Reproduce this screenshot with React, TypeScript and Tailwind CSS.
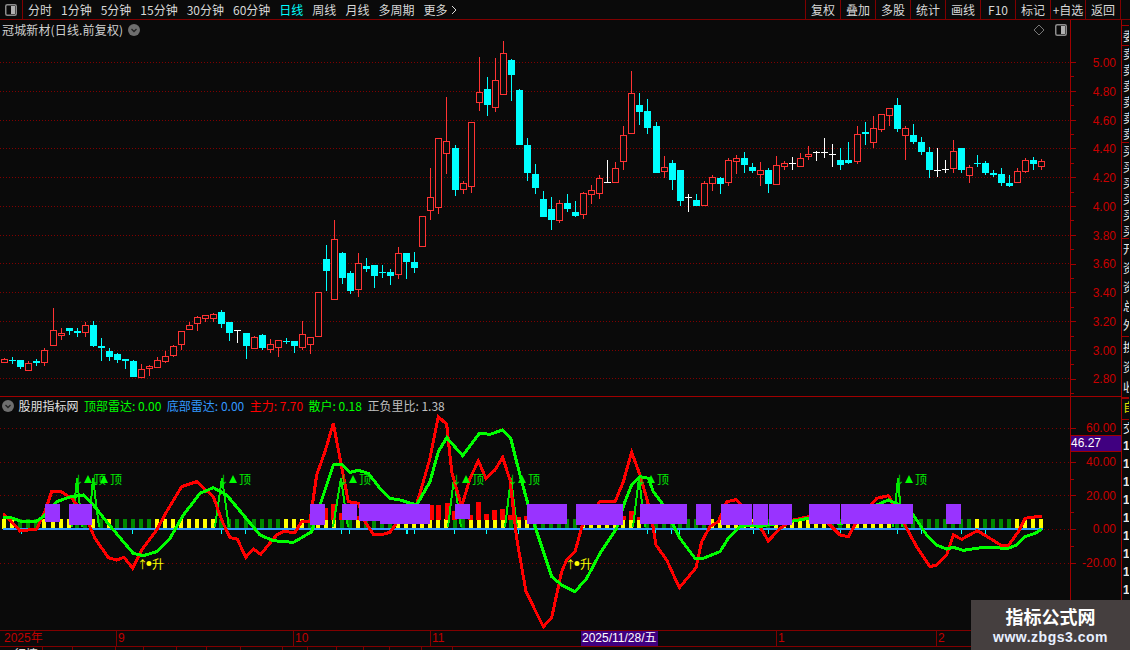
import React from 'react'

const CJK = { fontFamily: '"Noto Sans CJK SC", "Liberation Sans", sans-serif' }
const NUM = { fontFamily: '"Liberation Sans", "Noto Sans CJK SC", sans-serif' }

// t, b, hi, lo, colour (page y pixels)
const CANDLES: [number, number, number, number, string][] = [
  [359,362,358,363,'r'],[360,361,357,364,'c'],[360,367,360,369,'c'],[363,370,361,370,'r'],[361,363,359,366,'c'],
  [350,362,348,366,'r'],[330,345,308,345,'r'],[333,335,328,340,'r'],[328,331,328,335,'c'],[331,333,328,337,'c'],
  [325,332,322,337,'r'],[325,346,321,347,'c'],[346,348,338,361,'c'],[351,357,348,361,'c'],[354,360,353,363,'c'],
  [359,361,359,369,'c'],[361,377,360,377,'c'],[369,377,364,377,'r'],[366,368,365,376,'r'],[360,367,357,367,'r'],
  [356,361,351,363,'r'],[346,355,345,357,'r'],[331,344,331,350,'r'],[325,329,322,330,'r'],[317,323,316,331,'r'],
  [315,318,315,322,'r'],[314,318,313,322,'r'],[312,324,310,328,'c'],[322,333,322,341,'c'],[330,331,330,343,'w'],
  [333,346,333,359,'c'],[337,348,336,348,'r'],[335,348,334,350,'c'],[344,349,339,353,'r'],[340,347,340,357,'r'],
  [341,342,338,344,'c'],[341,346,341,353,'c'],[334,347,321,350,'r'],[337,344,337,354,'r'],[292,336,292,337,'r'],
  [259,271,245,291,'c'],[239,299,220,299,'r'],[253,278,252,284,'c'],[273,291,271,294,'c'],[263,289,253,297,'r'],
  [266,269,258,272,'c'],[265,276,265,288,'c'],[272,273,265,278,'c'],[272,276,269,285,'c'],[253,274,247,279,'r'],
  [253,262,253,279,'c'],[262,268,252,273,'c'],[216,246,216,246,'r'],[197,210,168,220,'r'],[138,207,138,214,'r'],
  [141,153,97,174,'r'],[148,190,145,196,'c'],[183,189,181,194,'r'],[122,186,122,193,'r'],[92,102,57,111,'r'],
  [89,105,77,116,'c'],[80,107,58,112,'r'],[53,94,41,94,'r'],[60,75,59,101,'c'],[90,145,89,145,'c'],
  [145,173,138,181,'c'],[174,188,164,194,'c'],[199,217,191,217,'c'],[209,220,197,230,'c'],[203,220,200,223,'r'],
  [203,209,194,212,'c'],[212,216,201,217,'c'],[193,214,192,219,'r'],[190,194,185,204,'r'],[178,193,175,199,'r'],
  [182,183,160,183,'w'],[168,182,162,183,'r'],[135,161,126,170,'r'],[93,133,71,133,'r'],[105,112,93,125,'c'],
  [111,128,99,134,'c'],[126,173,122,173,'c'],[167,171,156,178,'r'],[163,180,160,190,'c'],[170,201,170,206,'c'],
  [197,198,194,212,'w'],[200,206,194,206,'c'],[183,205,181,206,'r'],[177,183,175,191,'r'],[178,184,177,194,'c'],
  [160,182,158,186,'r'],[158,161,155,174,'r'],[158,165,152,173,'c'],[167,171,163,173,'c'],[170,174,162,186,'r'],
  [170,184,168,193,'c'],[165,184,156,184,'r'],[163,166,161,170,'r'],[163,164,157,170,'w'],[158,166,153,167,'r'],
  [154,156,146,160,'r'],[152,153,151,161,'w'],[152,153,138,158,'w'],[154,155,144,167,'w'],[160,165,148,170,'c'],
  [160,163,142,164,'c'],[134,161,126,164,'r'],[132,134,122,145,'c'],[128,142,116,148,'r'],[114,129,114,132,'r'],
  [108,115,108,126,'r'],[105,129,98,132,'c'],[128,135,126,160,'r'],[135,142,124,144,'c'],[142,152,137,155,'c'],
  [152,170,147,178,'c'],[170,171,148,177,'w'],[169,170,160,173,'w'],[151,168,140,173,'r'],[148,170,148,173,'c'],
  [167,175,165,183,'r'],[163,164,155,167,'c'],[163,173,161,175,'c'],[173,175,170,177,'c'],[174,183,168,186,'c'],
  [183,186,175,187,'c'],[171,182,168,183,'r'],[160,171,158,173,'r'],[160,164,157,170,'c'],[161,166,159,170,'r'],
]

const BARS =
  'YYGGGYYYYGGYGYGGGGGYYYYYYYYGGGGGGGGYYYGYYYGGYGG' +
  'GGYYYYYYYGGYYYYYGYYGGGGGGYYYYYYYYGGGGGGGGYYYYYY' +
  'GGYYYYYYYGGYYYYYYGGGGGGGGGGYGGGGYYYY'

const cx = (i: number) => Math.round(4.3 + 8.04 * i)

// Line points read at 3x, with the x offset of each crop
const at = (off: number, pts: number[][]) => pts.map(([x, y]) => `${off + x / 3},${395 + y / 3}`)

const RED = [
  ...at(0, [[10,356],[30,375],[60,408],[110,402],[135,350],[155,290],[185,291],[215,310],[240,340],[265,385],[285,430],[325,488],[350,495],[372,487],[398,520],[425,465],[470,405],[500,350],[545,275],[590,260],[640,305],[665,375],[690,428],[712,432],[737,487],[760,462],[782,478],[830,420],[850,410],[885,412],[905,380],[930,380],[950,240],[975,170],[1000,85],[1020,190],[1045,320],[1075,325],[1095,380],[1120,418]]),
  ...at(380, [[0,420],[30,412],[60,370],[105,345],[130,260],[150,190],[175,65],[200,88],[215,230],[245,335],[270,250],[295,198],[318,250],[345,225],[368,187],[390,255],[410,430],[438,590],[490,695],[515,668],[545,530],[560,495],[585,470],[610,380],[660,320],[705,320],[730,260],[755,172],[780,240],[800,310],[815,370],[828,450],[860,495],[898,578],[948,518],[965,440],[990,395],[1015,380],[1040,320],[1068,314],[1090,335]]),
  ...at(750, [[5,385],[30,395],[55,438],[90,400],[130,375],[175,365],[230,380],[270,420],[295,425],[320,380],[380,310],[415,302],[445,350],[470,400],[500,455],[540,515],[560,510],[590,480],[610,420],[635,433],[682,407],[720,430],[755,452],[775,452],[805,410],[825,370],[875,363]]),
].join(' ')

const GREEN = [
  ...at(0, [[10,367],[30,367],[60,378],[110,378],[130,365],[170,320],[210,306],[250,300],[280,330],[320,380],[370,440],[400,475],[430,482],[470,470],[510,430],[550,360],[600,295],[640,278],[680,300],[730,360],[780,420],[820,437],[880,442],[910,425],[935,410],[960,330],[1000,210],[1025,208],[1050,232],[1075,226],[1105,235]]),
  ...at(380, [[0,280],[30,310],[60,315],[110,330],[150,260],[175,170],[200,128],[248,182],[298,115],[330,118],[367,105],[392,130],[420,240],[450,350],[490,470],[515,545],[545,570],[585,590],[620,550],[660,475],[710,400],[735,320],[755,270],[780,245],[805,250],[820,290],[850,330],[880,390],[900,430],[945,490],[970,490],[1020,470],[1045,430],[1080,395]]),
  ...at(750, [[0,390],[30,395],[50,390],[90,385],[130,378],[175,370],[230,380],[270,385],[310,380],[380,330],[415,315],[450,330],[490,360],[530,420],[560,450],[590,462],[610,457],[640,466],[680,460],[700,457],[775,460],[800,450],[825,425],[855,415],[875,403]]),
].join(' ')

// left foot, peak, right foot
const SPIKES = [[72,77,82],[89,93,99],[215,222,229],[333,341,348],[448,454,461],[505,511,517],[633,639,645],[893,898,902]]
const TOPS = [88,104,233,353,466,522,651,909]
const RISES = [142,570]
const TICKS = [21,132,221,245,341,349,407,406,406+0.1,414,454,486,518,647,655,671,679,753,768,840,897,921,961,985]

// x1, x2, bottom
const BLOCKS = [
  [45,60,522],[69,92,525],[310,325,525],[342,357,520],[359,380,521],
  [380,430,524],[455,470,519],[527,567,524],[576,623,525],[640,687,524],
  [696,711,525],[721,752,525],[753,768,525],[769,792,525],[809,840,524],[841,913,524],[946,961,524],
]

const REDBARS = [
  [325,508],[333,504],[341,513],[358,516],
  [431,505],[438,505],[447,503],[454,511],[470,515],[478,502],[486,514],[494,510],[502,509],[510,515],[518,517],[526,516],
  [623,516],[631,511],[639,517],
]

const NAV = ['分时', '1分钟', '5分钟', '15分钟', '30分钟', '60分钟', '日线', '周线', '月线', '多周期']
const TOOLS = ['复权', '叠加', '多股', '统计', '画线', 'F10', '标记', '+自选', '返回']
const PRICES = ['5.00', '4.80', '4.60', '4.40', '4.20', '4.00', '3.80', '3.60', '3.40', '3.20', '3.00', '2.80']
const OSC = ['60.00', '40.00', '20.00', '0.00', '-20.00']

function PanelIcon({ className }: { className: string }) {
  return (
    <svg viewBox="0 0 12 12" className={className}>
      <rect x="0.75" y="0.75" width="10.5" height="10.5" rx="1.5" fill="none" stroke="#8c8c8c" strokeWidth="1.5" />
      <rect x="6" y="2" width="4" height="8" fill="#b0b0b0" />
    </svg>
  )
}

function Chevron({ className }: { className: string }) {
  return (
    <svg viewBox="0 0 12 12" className={className}>
      <circle cx="6" cy="6" r="6" fill="#6e6e6e" />
      <path d="M3.5 5 L6 7.5 L8.5 5" fill="none" stroke="#222" strokeWidth="1.3" />
    </svg>
  )
}

function TopBar() {
  return (
    <div className="flex h-[20px] shrink-0 items-stretch border-b border-[#800000] text-[12px] leading-[19px] text-[#d8d8d8]" style={CJK}>
      <div className="flex w-[23px] items-center justify-center border-r border-[#800000]">
        <PanelIcon className="h-[12px] w-[12px]" />
      </div>
      <div className="ml-[5px] flex gap-[9px]">
        {NAV.map((n) => (
          <span key={n} className={n === '日线' ? 'text-[#00ffff]' : ''}>{n}</span>
        ))}
        <span className="flex items-center gap-[4px]">
          更多
          <svg viewBox="0 0 6 10" className="h-[10px] w-[6px]">
            <path d="M1 1 L5 5 L1 9" fill="none" stroke="#d8d8d8" />
          </svg>
        </span>
      </div>
      <div className="ml-auto flex">
        {TOOLS.map((t) => (
          <span key={t} className="w-[35px] border-l border-[#800000] text-center">{t}</span>
        ))}
        <span className="w-[10px] border-l border-[#800000]" />
      </div>
    </div>
  )
}

function MainChart() {
  return (
    <svg viewBox="0 20 1070 376" className="absolute inset-0 h-[376px] w-[1070px]" shapeRendering="crispEdges">
      {PRICES.map((_, i) => (
        <line key={i} x1="0" x2="1070" y1={62.5 + Math.round(28.75 * i)} y2={62.5 + Math.round(28.75 * i)} stroke="#800000" strokeDasharray="1 2" />
      ))}
      {CANDLES.map(([t, b, hi, lo, c], i) => {
        const x = cx(i)
        const col = c === 'r' ? '#ff3333' : c === 'c' ? '#00ffff' : '#ffffff'
        return (
          <g key={i}>
            <line x1={x + 0.5} x2={x + 0.5} y1={hi} y2={lo} stroke={col} />
            {c === 'r' ? (
              <rect x={x - 2.5} y={t + 0.5} width="6" height={Math.max(b - t, 1)} fill="#0a0a0a" stroke={col} />
            ) : (
              <rect x={x - 3} y={t} width="7" height={Math.max(b - t, 1)} fill={col} />
            )}
          </g>
        )
      })}
    </svg>
  )
}

function Oscillator() {
  return (
    <svg viewBox="0 397 1070 233" className="absolute inset-0 h-[233px] w-[1070px]" style={CJK}>
      <g shapeRendering="crispEdges">
        {[428.5, 462.5, 495.5, 563.5].map((y) => (
          <line key={y} x1="0" x2="1070" y1={y} y2={y} stroke="#800000" strokeDasharray="1 3" />
        ))}
        <line x1="1044" x2="1070" y1="529.5" y2="529.5" stroke="#800000" strokeDasharray="1 3" />
        {BARS.split('').map((b, i) => (
          <rect key={i} x={cx(i) - 2} y="519" width="4" height="10" fill={b === 'Y' ? '#ffff00' : '#008a00'} />
        ))}
        {TICKS.map((x) => (
          <line key={x} x1={x} x2={x} y1="530" y2="534" stroke="#00ffff" />
        ))}
        {REDBARS.map(([x, t]) => (
          <rect key={x} x={x - 2.5} y={t} width="5" height={520 - t} fill="#ff0000" />
        ))}
        <rect x="3" y="528" width="1040" height="2" fill="#3399ff" />
        {SPIKES.map(([a, p, c]) => (
          <polyline key={p} points={`${a},527 ${p},478 ${c},527`} fill="none" stroke="#00e800" strokeWidth="2" />
        ))}
        <polyline points={RED} fill="none" stroke="#ff0000" strokeWidth="3" />
        <polyline points={GREEN} fill="none" stroke="#00ff00" strokeWidth="3" />
        {BLOCKS.map(([a, c, b]) => (
          <rect key={a} x={a} y="504" width={c - a} height={b - 504} fill="#9933ff" />
        ))}
      </g>
      {TOPS.map((x) => (
        <g key={x}>
          <path d={`M${x - 4} 483 L${x} 475 L${x + 4} 483 Z`} fill="#00ff00" />
          <text x={x + 6} y="484" fontSize="12" fill="#00e800">顶</text>
          <text x={x - 15} y="484" fontSize="11" fill="#00e800">↓</text>
        </g>
      ))}
      {RISES.map((x) => (
        <g key={x} fill="#ffff00">
          <text x={x - 5} y="569" fontSize="11">↑</text>
          <circle cx={x + 7} cy="563.5" r="2.5" />
          <text x={x + 10} y="569" fontSize="12">升</text>
        </g>
      ))}
    </svg>
  )
}

function Legend() {
  return (
    <div className="relative flex h-[18px] items-center gap-[5.5px] pl-[2px] text-[12px]" style={CJK}>
      <Chevron className="h-[12px] w-[12px]" />
      <span className="ml-[-1px] text-[#e0e0e0]">股朋指标网</span>
      <span className="text-[#00ff00]">顶部雷达: 0.00</span>
      <span className="text-[#3399ff]">底部雷达: 0.00</span>
      <span className="text-[#ff0000]">主力: 7.70</span>
      <span className="text-[#00ff00]">散户: 0.18</span>
      <span className="text-[#c0c0c0]">正负里比: 1.38</span>
    </div>
  )
}

function DateRow() {
  const cell = 'border-l border-[#800000] pl-[1px] text-[#c00000]'
  return (
    <div className="flex h-[17px] shrink-0 border-y border-[#800000] text-[12px] leading-[15px]" style={NUM}>
      <span className="w-[116px] pl-[4px] text-[#c00000]">2025年</span>
      <span className={`${cell} w-[177px]`}>9</span>
      <span className={`${cell} w-[137px]`}>10</span>
      <span className={`${cell} w-[151px]`}>11</span>
      <span className="w-[77px] whitespace-nowrap bg-[#400080] pl-[1px] text-[#ffffff]">2025/11/28/五</span>
      <span className="w-[118px]" />
      <span className={`${cell} w-[160px]`}>1</span>
      <span className={`${cell} w-[134px]`}>2</span>
    </div>
  )
}

function PriceAxis() {
  return (
    <div className="relative flex w-[51px] flex-col border-l border-[#a00000] pt-[29px] text-right text-[12px] text-[#c80000]" style={NUM}>
      <svg viewBox="0 20 50 376" className="absolute inset-0 h-[376px] w-[50px]" shapeRendering="crispEdges">
        {Array.from({ length: 24 }).map((_, i) => (
          <line key={i} x1="0" x2={i % 2 ? 3 : 5} y1={62.5 + 14.4 * i} y2={62.5 + 14.4 * i} stroke="#a00000" />
        ))}
      </svg>
      {PRICES.map((p) => (
        <span key={p} className="h-[28.75px] pr-[5px] leading-[28px]">{p}</span>
      ))}
    </div>
  )
}

function OscAxis() {
  return (
    <div className="relative flex w-[51px] flex-col border-l border-[#a00000] pt-[15px] text-right text-[12px] text-[#c80000]" style={NUM}>
      <svg viewBox="0 397 50 233" className="absolute inset-0 h-[233px] w-[50px]" shapeRendering="crispEdges">
        {Array.from({ length: 9 }).map((_, i) => (
          <line key={i} x1="0" x2={i % 2 ? 3 : 5} y1={428.5 + 16.85 * i} y2={428.5 + 16.85 * i} stroke="#a00000" />
        ))}
      </svg>
      {OSC.map((p) => (
        <span key={p} className="h-[33.75px] pr-[5px] leading-[33px]">{p}</span>
      ))}
      <span className="absolute left-0 top-[38px] h-[17px] w-[50px] border-y border-[#a00000] bg-[#400080] text-left leading-[15px] text-[#ffffff]">46.27</span>
    </div>
  )
}

function SideColumn() {
  const groups: [string, string[], string][] = [
    ['h-[20px]', ['委'], 'h-[20px]'],
    ['h-[97px]', ['卖', '卖', '卖', '卖', '卖', '卖'], 'h-[16px]'],
    ['h-[96px]', ['买', '买', '买', '买', '买', '买'], 'h-[16px]'],
    ['h-[98px]', ['开', '资', '资', '总', '外'], 'h-[19px]'],
    ['h-[61px]', ['换', '资', '收'], 'h-[20px]'],
  ]
  return (
    <div className="w-[8px] overflow-hidden border-l border-[#a00000] pt-[5px] text-[12px] leading-none text-[#e8e8e8]" style={CJK}>
      {groups.map(([h, chars, row], g) => (
        <div key={g} className={`${h} w-[20px] border-t border-[#a00000]`}>
          {chars.map((c, i) => (
            <div key={i} className={`${row} flex items-center pl-[1px]`}>{c}</div>
          ))}
        </div>
      ))}
      <div className="h-[22px] w-[20px] border-t-2 border-[#a00000] pl-[1px] pt-[2px] text-[#e0e000]">自</div>
      <div className="h-[18px] w-[20px] border-t border-[#a00000] pl-[1px] pt-[2px]">交</div>
      {Array.from({ length: 9 }).map((_, i) => (
        <div key={i} className="flex h-[18px] items-center pl-[1px] font-bold" style={NUM}>1</div>
      ))}
    </div>
  )
}

export default function App() {
  return (
    <div className="relative flex h-[650px] w-[1130px] flex-col overflow-hidden bg-[#0a0a0a]">
      <TopBar />
      <div className="flex min-h-0 flex-1">
        <div className="flex w-[1121px] flex-col">
          <div className="flex h-[376px] shrink-0">
            <div className="relative w-[1070px]">
              <MainChart />
              <div className="relative flex items-center gap-[5px] pl-[2px] text-[12px] leading-[19px] text-[#d0d0d0]" style={CJK}>
                <span className="tracking-[0.15px]">冠城新材(日线.前复权)</span>
                <Chevron className="h-[12px] w-[12px]" />
                <svg viewBox="0 0 12 12" className="ml-auto h-[12px] w-[12px]">
                  <path d="M6 1 L11 6 L6 11 L1 6 Z" fill="none" stroke="#777" />
                </svg>
                <PanelIcon className="ml-[5px] mr-[3px] h-[12px] w-[12px]" />
              </div>
            </div>
            <PriceAxis />
          </div>
          <div className="h-[1px] shrink-0 bg-[#a00000]" />
          <div className="flex h-[233px] shrink-0">
            <div className="relative w-[1070px]">
              <Oscillator />
              <Legend />
            </div>
            <OscAxis />
          </div>
          <DateRow />
          <div className="flex flex-1 overflow-hidden text-[12px] leading-[14px] text-[#e0e0e0]">
            {[43, 30, 43, 28, 33, 30, 34, 42, 25, 29, 27, 26, 32, 31].map((w, i) => (
              <span key={i} className="overflow-hidden border-r border-[#800000] pl-[14px]" style={{ width: w, ...CJK }}>{i === 0 ? '行情' : ''}</span>
            ))}
          </div>
        </div>
        <SideColumn />
      </div>
      <div className="absolute bottom-0 right-0 flex h-[50px] w-[159px] flex-col items-center justify-center bg-[#453f3f]" style={CJK}>
        <span className="text-[18px] font-bold leading-[24px] text-[#ffffff]">指标公式网</span>
        <span className="text-[14px] font-bold leading-[18px] tracking-[0.5px] text-[#e8f0ff]" style={NUM}>www.zbgs3.com</span>
      </div>
    </div>
  )
}
